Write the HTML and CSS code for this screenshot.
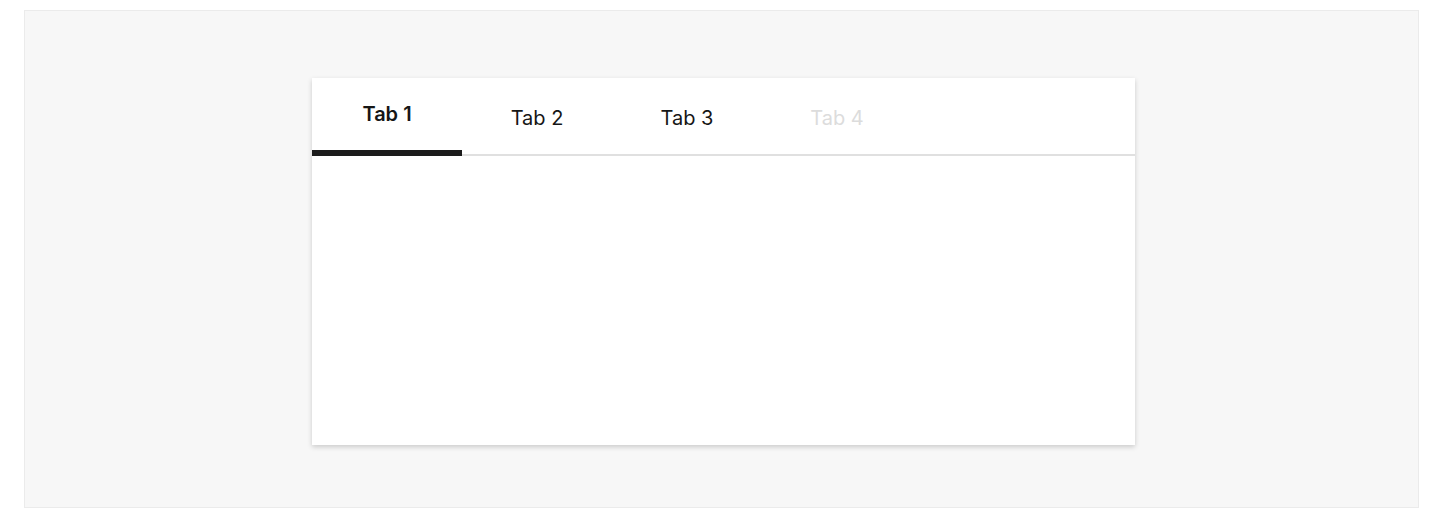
FILE: index.html
```html
<!DOCTYPE html>
<html lang="en">
<head>
<meta charset="utf-8">
<title>Tabs</title>
<link rel="stylesheet" href="styles.css">
</head>
<body>
<div class="stage">
  <div class="card">
    <div class="tablist" role="tablist">
      <button class="tab tab-active" role="tab">Tab 1</button>
      <button class="tab" role="tab">Tab 2</button>
      <button class="tab" role="tab">Tab 3</button>
      <button class="tab tab-disabled" role="tab" disabled>Tab 4</button>
    </div>
    <div class="panel"></div>
  </div>
</div>
</body>
</html>
```

FILE: styles.css
```css
html, body {
  margin: 0;
  padding: 0;
  background: #ffffff;
}
body {
  padding: 10px 24px 24px 24px;
  font-family: Inter, "Noto Sans", sans-serif;
}
.stage {
  box-sizing: border-box;
  height: 498px;
  background: #f7f7f7;
  border: 1px solid #ebebeb;
  display: flex;
  justify-content: center;
  align-items: flex-start;
  padding-top: 67px;
  padding-left: 4px;
}
.card {
  width: 823px;
  height: 367px;
  background: #ffffff;
  box-shadow: 0 2px 5px rgba(0, 0, 0, 0.18);
  display: flex;
  flex-direction: column;
}
.tablist {
  display: flex;
  align-items: flex-start;
  border-bottom: 2px solid #e0e0e0;
  height: 76px;
}
.tab {
  box-sizing: border-box;
  width: 150px;
  height: 76px;
  margin: 0;
  padding: 0;
  border: 0;
  background: transparent;
  font-family: Inter, "Noto Sans", sans-serif;
  font-size: 20px;
  line-height: 24px;
  font-weight: 400;
  color: #161616;
  display: flex;
  align-items: center;
  justify-content: center;
  padding-top: 4px;
}
.tab-active {
  height: 78px;
  font-weight: 600;
  border-bottom: 6px solid #1c1c1c;
  padding-top: 0;
}
.tab-disabled {
  color: #dcdcdc;
}
.panel {
  flex: 1;
}
```
